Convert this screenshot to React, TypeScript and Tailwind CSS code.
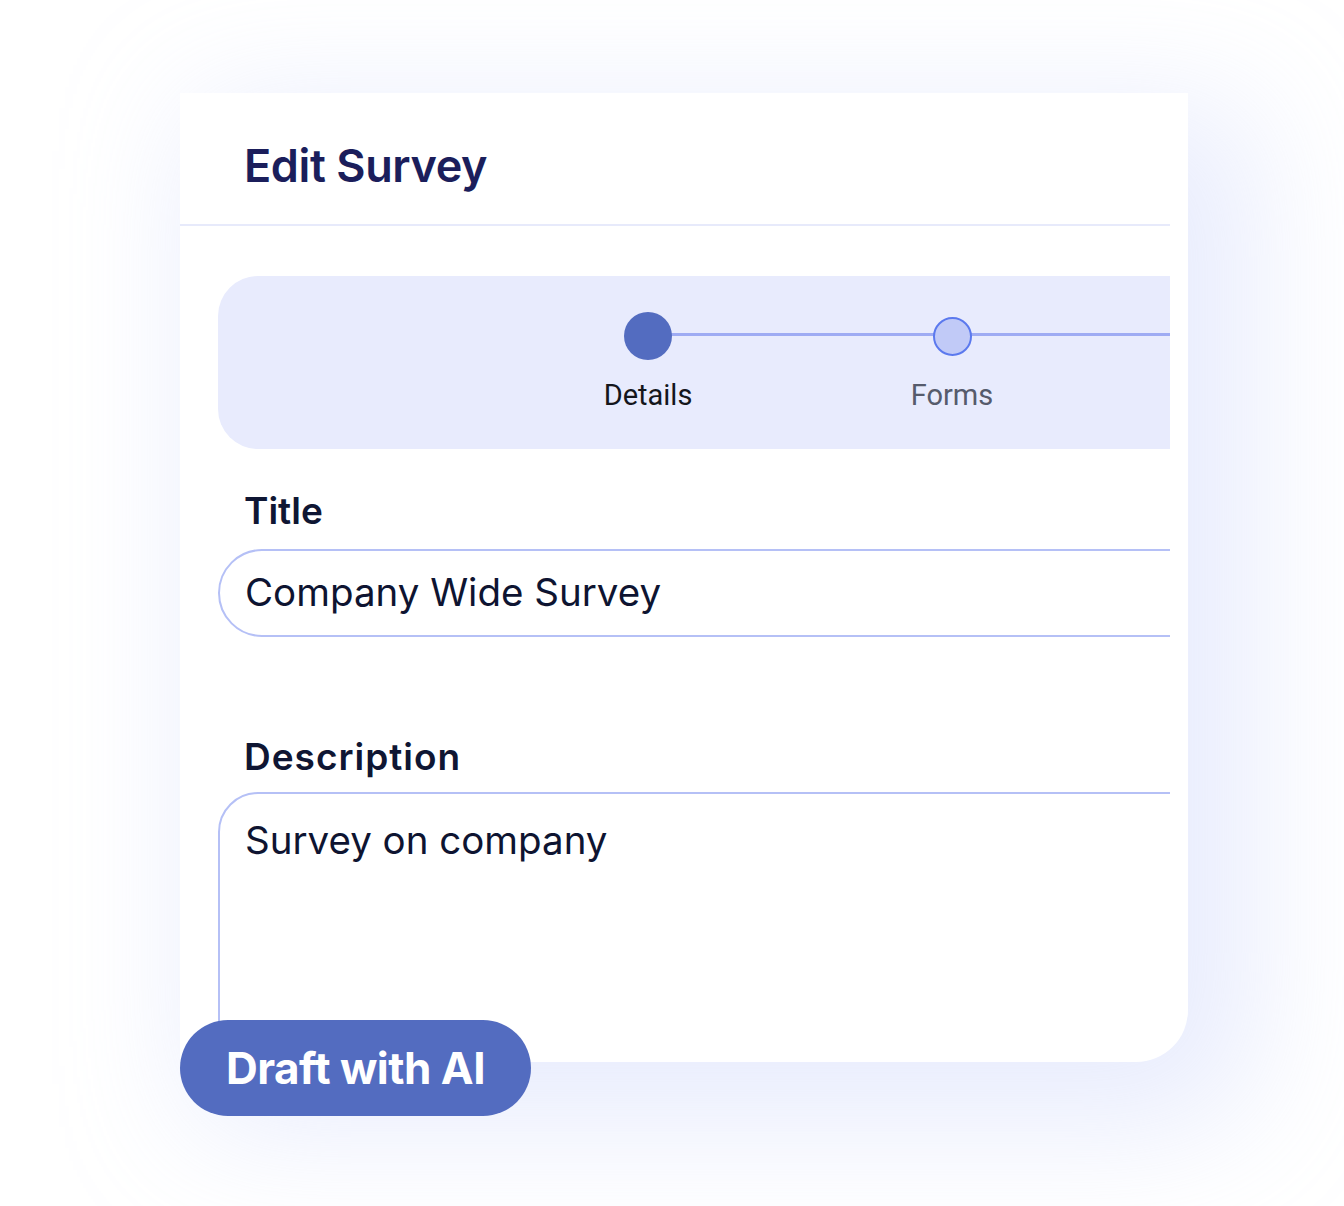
export default function App() {
  const font = { fontFamily: 'Inter, "Noto Sans", sans-serif' }

  return (
    <div className="h-[1206px] w-[1344px] overflow-hidden bg-white pt-[93px] pl-[180px]" style={font}>
      <div className="relative w-[1008px]">
        <div className="h-[969px] w-[1008px] overflow-hidden rounded-br-[52px] bg-white shadow-[40px_40px_130px_25px_rgba(222,228,252,0.7)]">
          <div className="h-full w-[990px] overflow-hidden">
            {/* header */}
            <div className="flex h-[133px] items-center border-b-2 border-[#e7eafb] pl-[64px] pt-[14px]">
              <h1 className="text-[45px] font-semibold tracking-[-0.4px] text-[#1b1e5b]">Edit Survey</h1>
            </div>

            <div className="pl-[38px]">
              {/* stepper */}
              <div className="mt-[50px] flex h-[173px] w-[1100px] rounded-l-[40px] bg-[#e8ebfd] pl-[278px]">
                {[
                  { label: 'Details', active: true },
                  { label: 'Forms', active: false },
                ].map((s) => (
                  <div key={s.label} className="relative flex w-[304px] flex-none flex-col items-center pt-[36px]">
                    <div className="absolute left-1/2 top-[57px] h-[3px] w-[400px] bg-[#9eabf3]" />
                    <div className="relative flex h-[48px] items-center">
                      {s.active ? (
                        <div className="h-[48px] w-[48px] rounded-full bg-[#536cc0]" />
                      ) : (
                        <div className="h-[39px] w-[39px] rounded-full border-2 border-[#5b79ee] bg-[#c1caf7]" />
                      )}
                    </div>
                    <span
                      className={`mt-[14px] text-[29px] ${s.active ? 'text-[#14161c]' : 'text-[#565b6c]'}`}
                      style={{ fontFamily: 'Roboto, sans-serif' }}
                    >
                      {s.label}
                    </span>
                  </div>
                ))}
              </div>

              {/* title */}
              <label className="mt-[40px] block pl-[26px] text-[37px] font-semibold leading-[44px] text-[#0f1633]">
                Title
              </label>
              <div className="mt-[16px] flex h-[88px] w-[1000px] items-center rounded-l-full border-2 border-[#b5c0f6] pl-[25px] text-[38.5px] text-[#0e1431]">
                Company Wide Survey
              </div>

              {/* description */}
              <label className="mt-[98px] block pl-[26px] text-[37px] font-semibold leading-[44px] tracking-[1px] text-[#0f1633]">
                Description
              </label>
              <div className="mt-[13px] h-[320px] w-[1000px] rounded-tl-[40px] border-2 border-[#b5c0f6] pl-[25px] pt-[18px] text-[38.5px] text-[#0e1431]">
                Survey on company
              </div>
            </div>
          </div>
        </div>

        <button className="absolute left-0 top-[927px] flex h-[96px] w-[351px] items-center justify-center rounded-full bg-[#536cc0] text-[44px] font-bold tracking-[-0.5px] text-white">
          Draft with AI
        </button>
      </div>
    </div>
  )
}
